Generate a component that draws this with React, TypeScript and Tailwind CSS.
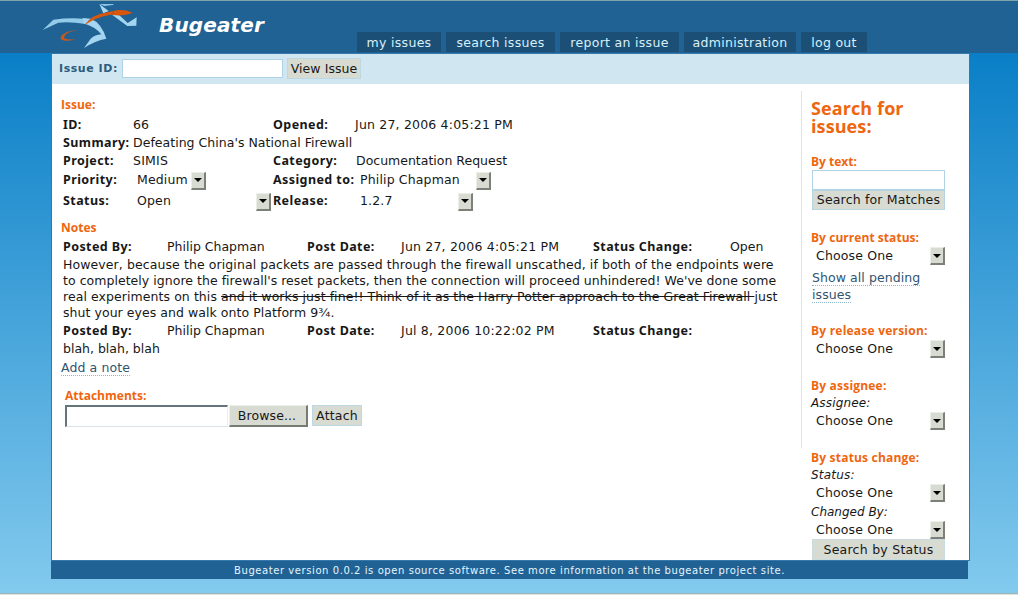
import { ReactNode } from "react";

function SelectArrow() {
  return (
    <span className="flex h-[18px] w-[15px] shrink-0 items-center justify-center border-t border-l border-r-2 border-b-2 border-t-[#eceee8] border-l-[#eceee8] border-r-[#7d8079] border-b-[#7d8079] bg-[#d8dbd2]">
      <svg width="8" height="4" viewBox="0 0 8 4">
        <path d="M0 0h8L4 4z" fill="#000" />
      </svg>
    </span>
  );
}

function Select({ value, width }: { value: string; width: string }) {
  return (
    <div className={`flex h-[18px] items-center justify-between pl-1 tracking-[0.15px] ${width}`}>
      <span>{value}</span>
      <SelectArrow />
    </div>
  );
}

function Heading({ children, className = "" }: { children: ReactNode; className?: string }) {
  return (
    <h3 className={`h-4 font-['Open_Sans',sans-serif] text-[12px] leading-4 font-bold whitespace-nowrap text-[#ee660f] ${className}`}>
      {children}
    </h3>
  );
}

function Label({ children, className = "" }: { children: ReactNode; className?: string }) {
  return (
    <span className={`shrink-0 font-['Noto_Sans',sans-serif] text-[12.5px] font-bold tracking-[0.42px] whitespace-nowrap ${className}`}>
      {children}
    </span>
  );
}

function Logo() {
  return (
    <svg width="100" height="52" viewBox="0 3 300 156" className="block">
      <path d="M8 90 L40 59 Q85 53 130 56 L137 72 Q90 64 55 68 Z" fill="#93cbea" />
      <path d="M128 54 L152 56 Q184 68 199 116 Q165 122 132 144 L152 116 Q166 104 184 103 Q165 80 130 70 Z" fill="#a4d6f1" />
      <path d="M178 12 L206 33 L190 40 Z" fill="#a9d8f2" />
      <path d="M178 12 L222 12 L218 15 L193 18 Z" fill="#8cc5e6" />
      <path d="M214 43 L238 46 L263 69 L290 52 L289 77 L262 78 Z" fill="#a4d6f1" />
      <path d="M133 76 Q154 44 202 37 L219 33 Q238 27 262 32 L278 39 Q254 48 228 46 L212 44 Q168 51 133 76Z" fill="#d9570c" />
      <path d="M218 33 Q224 39 217 44" fill="none" stroke="#7f4d42" strokeWidth="2" />
      <path d="M117 89 Q70 92 61 113 Q64 123 82 122 Q98 122 111 117 Q88 121 72 115 Q72 96 117 89Z" fill="#c8591d" />
    </svg>
  );
}

const NAV = [
  { label: "my issues", width: "w-[84px]" },
  { label: "search issues", width: "w-[109px]" },
  { label: "report an issue", width: "w-[119px]" },
  { label: "administration", width: "w-[112px]" },
  { label: "log out", width: "w-[66px]" },
];

function Header() {
  return (
    <header className="flex h-[53px] border-t border-[#7fa3ad] bg-[#206294] pl-10">
      <Logo />
      <h1 className="mt-[11px] ml-[19px] w-[198px] text-[20px] leading-[26px] font-bold tracking-[0.15px] text-white italic">Bugeater</h1>
      <nav className="mt-[31px] flex h-5 gap-[5px]">
        {NAV.map((n) => (
          <a key={n.label} className={`bg-[#1c4f76] text-center text-[12.5px] leading-[21px] tracking-[0.3px] whitespace-nowrap text-[#d8f0fa] ${n.width}`}>
            {n.label}
          </a>
        ))}
      </nav>
    </header>
  );
}

function IssueDetails() {
  return (
    <section>
      <Heading className="pl-[9px]">Issue:</Heading>
      <div className="mt-[3px] flex h-[18px] items-center pl-[11px]">
        <Label className="w-[70px]">ID:</Label>
        <span className="w-[140px]">66</span>
        <Label className="w-[82px]">Opened:</Label>
        <span className="tracking-[0.19px]">Jun 27, 2006 4:05:21 PM</span>
      </div>
      <div className="flex h-[18px] items-center pl-[11px]">
        <Label className="w-[70px]">Summary:</Label>
        <span className="tracking-[0.03px]">Defeating China's National Firewall</span>
      </div>
      <div className="flex h-[18px] items-center pl-[11px]">
        <Label className="w-[70px]">Project:</Label>
        <span className="w-[140px] tracking-[0.2px]">SIMIS</span>
        <Label className="w-[83px]">Category:</Label>
        <span>Documentation Request</span>
      </div>
      <div className="flex h-[21px] items-center pl-[11px]">
        <Label className="w-[70px]">Priority:</Label>
        <div className="w-[140px]"><Select value="Medium" width="w-[73px]" /></div>
        <Label className="w-[83px]">Assigned to:</Label>
        <Select value="Philip Chapman" width="w-[135px]" />
      </div>
      <div className="flex h-[21px] items-center pl-[11px]">
        <Label className="w-[70px]">Status:</Label>
        <div className="w-[140px]"><Select value="Open" width="w-[138px]" /></div>
        <Label className="w-[83px]">Release:</Label>
        <Select value="1.2.7" width="w-[117px]" />
      </div>
    </section>
  );
}

function NoteHeader({ date, status }: { date: string; status: string }) {
  return (
    <div className="flex h-[18px] items-center">
      <Label className="w-[104px]">Posted By:</Label>
      <span className="w-[140px]">Philip Chapman</span>
      <Label className="w-[94px]">Post Date:</Label>
      <span className="w-[192px] tracking-[0.2px]">{date}</span>
      <Label className="w-[137px]">Status Change:</Label>
      <span>{status}</span>
    </div>
  );
}

function Notes() {
  return (
    <section className="mt-2">
      <Heading className="pl-[9px]">Notes</Heading>
      <div className="mt-0.5 pl-[11px] whitespace-nowrap">
        <NoteHeader date="Jun 27, 2006 4:05:21 PM" status="Open" />
        <p className="mt-px leading-4">
          <span className="tracking-[0.092px]">However, because the original packets are passed through the firewall unscathed, if both of the endpoints were</span>
          <br />
          <span className="tracking-[0.036px]">to completely ignore the firewall's reset packets, then the connection will proceed unhindered! We've done some</span>
          <br />
          <span className="tracking-[0.07px]">
            real experiments on this <s>and it works just fine!! Think of it as the Harry Potter approach to the Great Firewall </s>just
          </span>
          <br />
          <span className="tracking-[0.05px]">shut your eyes and walk onto Platform 9¾.</span>
        </p>
        <div className="mt-px"><NoteHeader date="Jul 8, 2006 10:22:02 PM" status="" /></div>
        <p className="leading-[18px]">blah, blah, blah</p>
      </div>
      <a className="mt-0.5 ml-[9px] block h-4 w-fit border-b border-dotted border-[#8db7cc] leading-4 tracking-[0.1px] text-[#2f5470]">Add a note</a>
    </section>
  );
}

function Attachments() {
  return (
    <section className="mt-3 pl-[13px]">
      <Heading>Attachments:</Heading>
      <div className="mt-px flex h-[22px]">
        <input className="w-[163px] border-t-2 border-l-2 border-r border-b border-t-[#66757c] border-l-[#66757c] border-r-[#e8eef0] border-b-[#d8e4e8] bg-white" />
        <button className="ml-px w-[79px] border-t border-l border-r-2 border-b-2 border-t-[#eceee8] border-l-[#eceee8] border-r-[#777a73] border-b-[#777a73] bg-[#d8dbd2] pt-px pr-0.5 tracking-[0.1px]">Browse...</button>
        <button className="ml-1 h-[21px] w-[50px] border border-[#bcd8e4] bg-[#d8dbd2] leading-[19px] tracking-[0.2px]">Attach</button>
      </div>
    </section>
  );
}

function SearchPanel() {
  return (
    <aside className="w-[134px]">
      <h2 className="mt-[15px] font-['Open_Sans',sans-serif] text-[18px] leading-[18px] font-bold tracking-[0.1px] text-[#ee660f]">Search for<br />issues:</h2>
      <Heading className="mt-[19px]">By text:</Heading>
      <div className="ml-px">
        <input className="block h-5 w-[133px] border border-[#b0d2e6] bg-white" />
        <button className="block h-5 w-[133px] border border-[#b8d4e0] bg-[#d8dbd2] leading-[18px] tracking-[0.16px] whitespace-nowrap">Search for Matches</button>
      </div>
      <Heading className="mt-5 tracking-[0.05px]">By current status:</Heading>
      <div className="mt-px ml-px"><Select value="Choose One" width="w-[133px]" /></div>
      <div className="mt-1 ml-px leading-[17px] tracking-[0.07px] text-[#2f5470]">
        <a className="border-b border-dotted border-[#8db7cc]">Show all pending<br />issues</a>
      </div>
      <Heading className="mt-5 tracking-[0.22px]">By release version:</Heading>
      <div className="mt-px ml-px"><Select value="Choose One" width="w-[133px]" /></div>
      <Heading className="mt-5 tracking-[0.2px]">By assignee:</Heading>
      <p className="h-[18px] text-[12px] leading-[18px] tracking-[0.15px] italic">Assignee:</p>
      <div className="ml-px"><Select value="Choose One" width="w-[133px]" /></div>
      <Heading className="mt-5 tracking-[0.2px]">By status change:</Heading>
      <p className="h-[18px] text-[12px] leading-[18px] tracking-[0.2px] italic">Status:</p>
      <div className="ml-px"><Select value="Choose One" width="w-[133px]" /></div>
      <p className="h-[19px] pt-px text-[12px] leading-[18px] italic">Changed By:</p>
      <div className="ml-px"><Select value="Choose One" width="w-[133px]" /></div>
      <button className="ml-px block h-[21px] w-[133px] border border-[#c8dce0] bg-[#d8dbd2] leading-5 tracking-[0.25px]">Search by Status</button>
    </aside>
  );
}

export default function App() {
  return (
    <div className="flex h-[595px] w-[1018px] flex-col overflow-hidden bg-linear-to-b/srgb from-[#0a7fc7] from-9% to-[#83caee] font-['DejaVu_Sans',sans-serif] text-[12.5px] text-[#171717]">
      <Header />
      <main className="ml-[51px] h-[508px] w-[919px] border border-[#3579ac] bg-white">
        <form className="flex h-[30px] items-center bg-[#d0e7f2] pb-px pl-[7px]">
          <label className="w-[63px] pt-px text-[11px] font-bold tracking-[0.55px] whitespace-nowrap text-[#2c5b7d]">Issue ID:</label>
          <input className="h-[19px] w-[161px] border border-[#b0d2e6] bg-white" />
          <button type="button" className="ml-1 h-[21px] w-[74px] border border-[#bcd8e4] bg-[#d8dbd2] leading-[19px] tracking-[0.05px] whitespace-nowrap">View Issue</button>
        </form>
        <div className="flex">
          <div className="w-[749px] pt-[13px]">
            <IssueDetails />
            <Notes />
            <Attachments />
          </div>
          <div className="mt-[7px] mr-[9px] h-[357px] w-px bg-[#d5e9f4]" />
          <SearchPanel />
        </div>
      </main>
      <footer className="ml-[51px] h-[18px] w-[917px] bg-[#206294] text-center text-[10px] leading-[19px] tracking-[0.57px] text-[#e4f5ff]">
        Bugeater version 0.0.2 is open source software. See more information at the bugeater project site.
      </footer>
      <div className="mt-auto h-0.5 border-t border-[#9eb5b5] bg-[#dce5e0]" />
    </div>
  );
}
